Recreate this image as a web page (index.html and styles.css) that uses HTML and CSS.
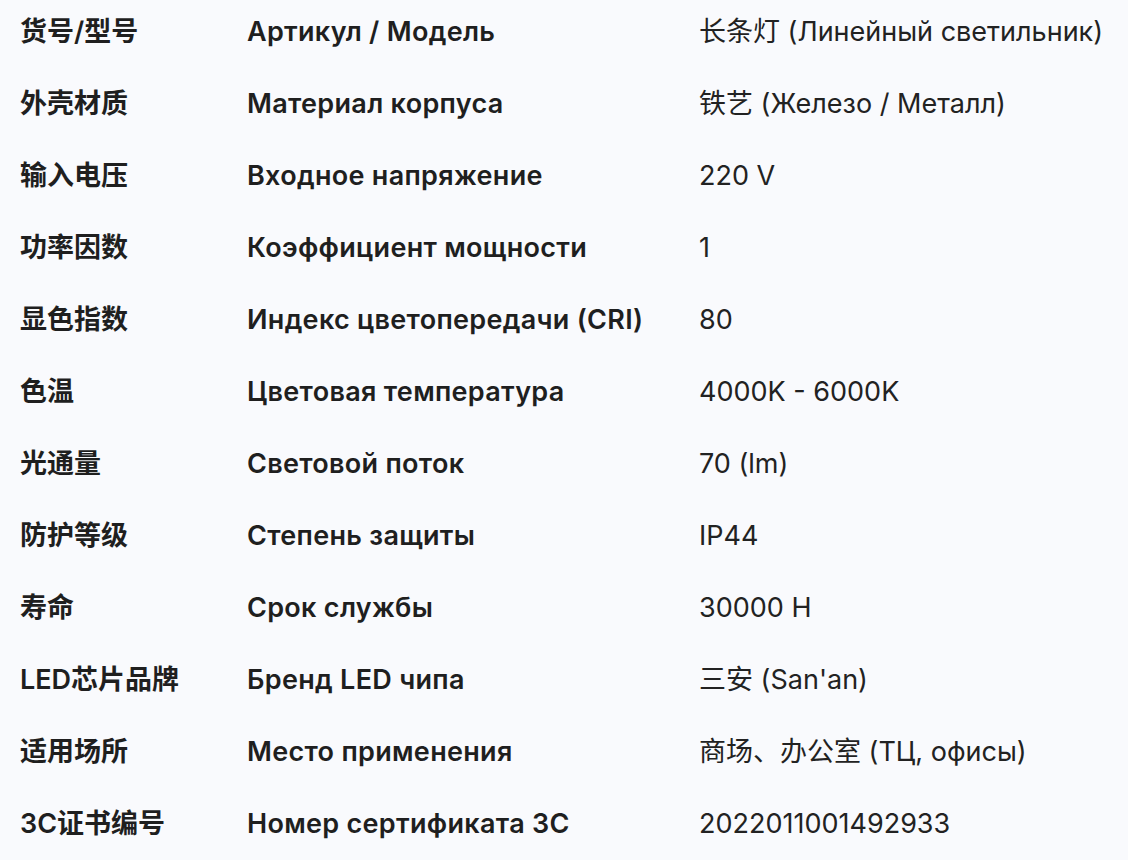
FILE: index.html
```html
<!DOCTYPE html>
<html lang="zh">
<head>
<meta charset="utf-8">
<link rel="stylesheet" href="styles.css">
</head>
<body>
<div class="specs">
  <div class="row"><div class="zh">货号/型号</div><div class="ru">Артикул / Модель</div><div class="val">长条灯 (Линейный светильник)</div></div>
  <div class="row"><div class="zh">外壳材质</div><div class="ru">Материал корпуса</div><div class="val">铁艺 (Железо / Металл)</div></div>
  <div class="row"><div class="zh">输入电压</div><div class="ru">Входное напряжение</div><div class="val">220 V</div></div>
  <div class="row"><div class="zh">功率因数</div><div class="ru">Коэффициент мощности</div><div class="val">1</div></div>
  <div class="row"><div class="zh">显色指数</div><div class="ru">Индекс цветопередачи (CRI)</div><div class="val">80</div></div>
  <div class="row"><div class="zh">色温</div><div class="ru">Цветовая температура</div><div class="val">4000K - 6000K</div></div>
  <div class="row"><div class="zh">光通量</div><div class="ru">Световой поток</div><div class="val">70 (lm)</div></div>
  <div class="row"><div class="zh">防护等级</div><div class="ru">Степень защиты</div><div class="val">IP44</div></div>
  <div class="row"><div class="zh">寿命</div><div class="ru">Срок службы</div><div class="val">30000 H</div></div>
  <div class="row"><div class="zh">LED芯片品牌</div><div class="ru">Бренд LED чипа</div><div class="val">三安 (San'an)</div></div>
  <div class="row"><div class="zh">适用场所</div><div class="ru">Место применения</div><div class="val">商场、办公室 (ТЦ, офисы)</div></div>
  <div class="row"><div class="zh">3C证书编号</div><div class="ru">Номер сертификата 3C</div><div class="val">2022011001492933</div></div>
</div>
</body>
</html>
```

FILE: styles.css
```css
html, body {
  margin: 0;
  padding: 0;
  background: #f9fafd;
}
body {
  font-family: Inter, "Noto Sans CJK SC", sans-serif;
  color: #1f1f1f;
  font-size: 27px;
  width: 1128px;
  height: 860px;
  overflow: hidden;
}
.specs {
  display: flex;
  flex-direction: column;
  padding-left: 20px;
}
.row {
  display: grid;
  grid-template-columns: 227px 452px 1fr;
  height: 72px;
  box-sizing: border-box;
  padding-top: 15px;
  line-height: 34px;
  white-space: nowrap;
}
.zh {
  font-weight: 600;
}
.ru {
  font-weight: 600;
  letter-spacing: 0.3px;
}
.val {
  font-weight: 400;
  color: #222;
}
```
